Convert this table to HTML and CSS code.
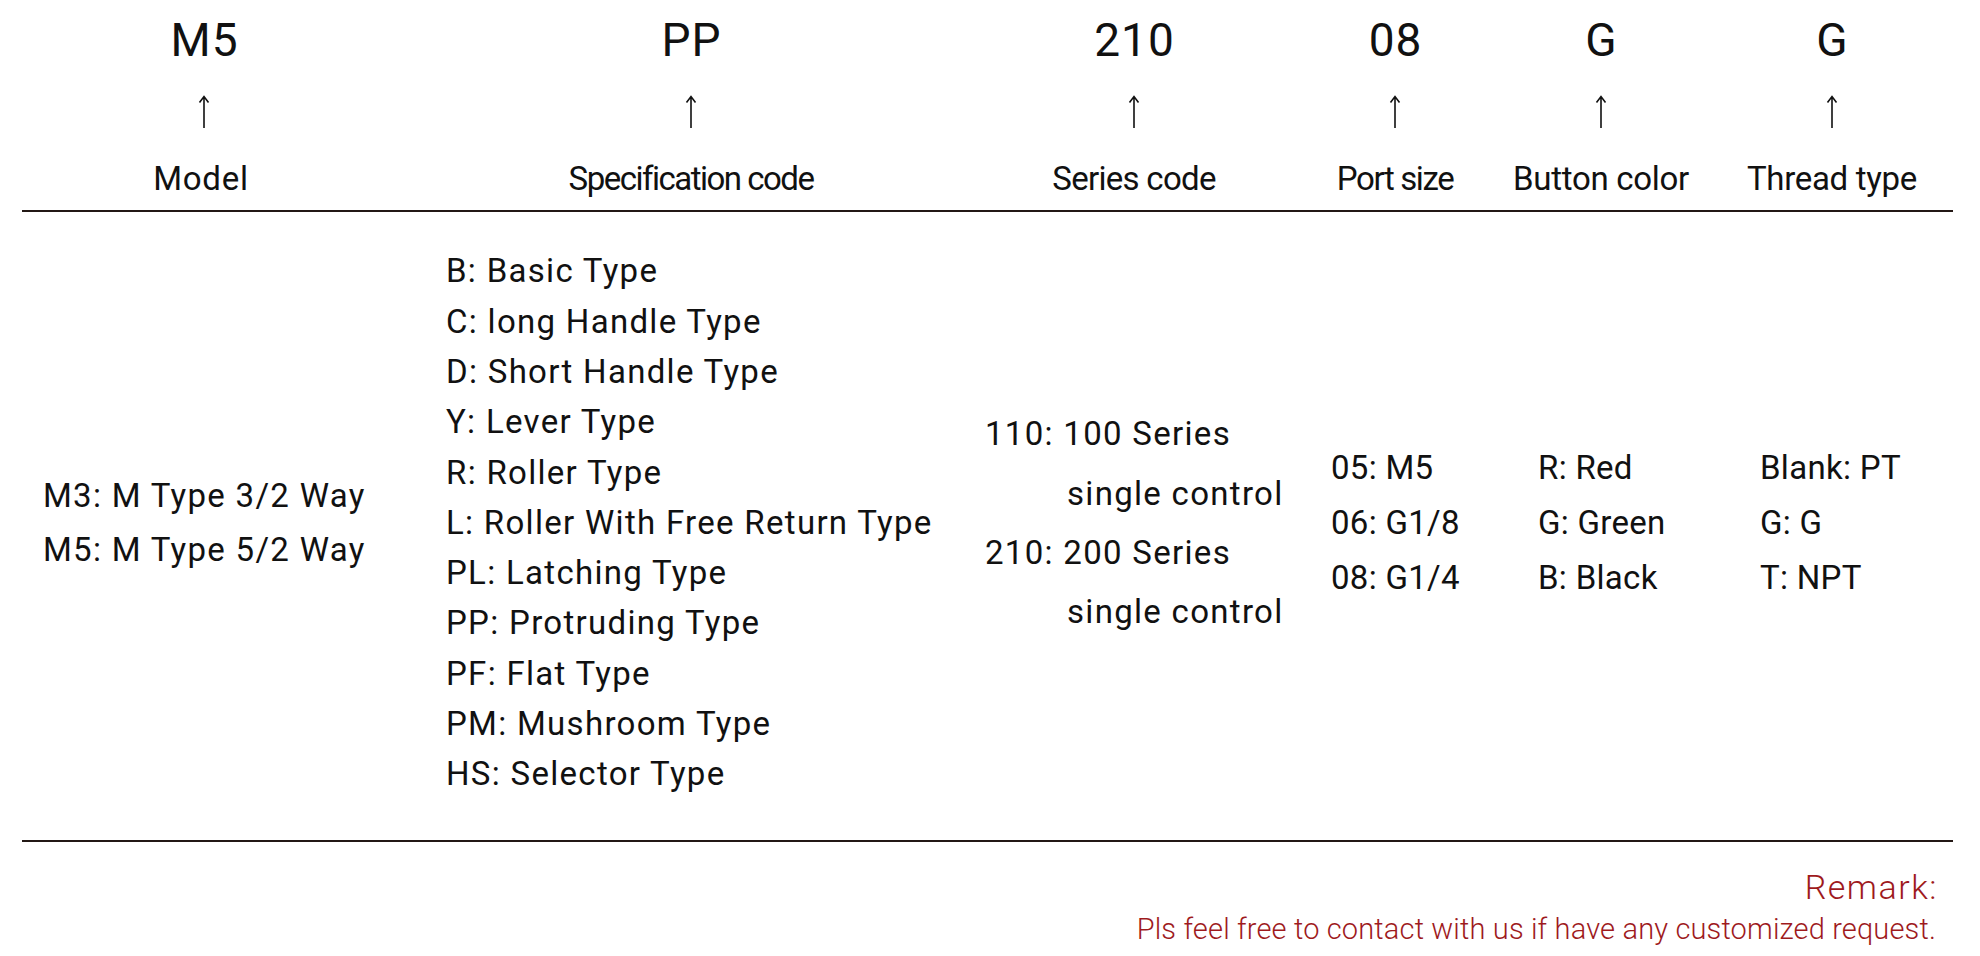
FILE: index.html
```html
<!DOCTYPE html>
<html lang="en">
<head>
<meta charset="utf-8">
<title>Model code</title>
<link rel="stylesheet" href="styles.css">
</head>
<body>
<div class="page">
  <div class="codes">
    <div class="code-col"><div class="code">M5</div><svg class="arrow" viewBox="0 0 14 33" width="14" height="33"><path d="M7 1.5V33M2.5 7.5L7 1.5L11.5 7.5"/></svg><div class="label label-model">Model</div></div>
    <div class="code-col"><div class="code">PP</div><svg class="arrow" viewBox="0 0 14 33" width="14" height="33"><path d="M7 1.5V33M2.5 7.5L7 1.5L11.5 7.5"/></svg><div class="label label-spec">Specification code</div></div>
    <div class="code-col"><div class="code">210</div><svg class="arrow" viewBox="0 0 14 33" width="14" height="33"><path d="M7 1.5V33M2.5 7.5L7 1.5L11.5 7.5"/></svg><div class="label label-series">Series code</div></div>
    <div class="code-col"><div class="code">08</div><svg class="arrow" viewBox="0 0 14 33" width="14" height="33"><path d="M7 1.5V33M2.5 7.5L7 1.5L11.5 7.5"/></svg><div class="label label-port">Port size</div></div>
    <div class="code-col"><div class="code">G</div><svg class="arrow" viewBox="0 0 14 33" width="14" height="33"><path d="M7 1.5V33M2.5 7.5L7 1.5L11.5 7.5"/></svg><div class="label label-tight">Button color</div></div>
    <div class="code-col code-col-last"><div class="code">G</div><svg class="arrow" viewBox="0 0 14 33" width="14" height="33"><path d="M7 1.5V33M2.5 7.5L7 1.5L11.5 7.5"/></svg><div class="label label-tight">Thread type</div></div>
  </div>
  <div class="options">
    <ul class="opt opt-wide opt-model">
      <li>M3: M Type 3/2 Way</li>
      <li>M5: M Type 5/2 Way</li>
    </ul>
    <ul class="opt opt-wide opt-spec">
      <li>B: Basic Type</li>
      <li>C: long Handle Type</li>
      <li>D: Short Handle Type</li>
      <li>Y: Lever Type</li>
      <li>R: Roller Type</li>
      <li>L: Roller With Free Return Type</li>
      <li>PL: Latching Type</li>
      <li>PP: Protruding Type</li>
      <li>PF: Flat Type</li>
      <li>PM: Mushroom Type</li>
      <li>HS: Selector Type</li>
    </ul>
    <ul class="opt opt-wide opt-series">
      <li>110: 100 Series</li>
      <li class="indent">single control</li>
      <li>210: 200 Series</li>
      <li class="indent">single control</li>
    </ul>
    <ul class="opt opt-short">
      <li>05: M5</li>
      <li>06: G1/8</li>
      <li>08: G1/4</li>
    </ul>
    <ul class="opt opt-short">
      <li>R: Red</li>
      <li>G: Green</li>
      <li>B: Black</li>
    </ul>
    <ul class="opt opt-short">
      <li>Blank: PT</li>
      <li>G: G</li>
      <li>T: NPT</li>
    </ul>
  </div>
  <div class="remark">
    <p class="remark-title">Remark:</p>
    <p class="remark-text">Pls feel free to contact with us if have any customized request.</p>
  </div>
</div>
</body>
</html>
```

FILE: styles.css
```css
* { box-sizing: border-box; }
html, body { margin: 0; padding: 0; background: #ffffff; }
body {
  font-family: Roboto, "Liberation Sans", Arial, sans-serif;
  color: #111111;
  width: 1980px;
  height: 956px;
  overflow: hidden;
}
.page { width: 1980px; }

.codes {
  display: grid;
  grid-template-columns: 364px 610px 276px 246px 166px 269px;
  padding: 14px 0 11px 0;
  margin: 0 27px 0 22px;
  border-bottom: 2px solid #231815;
}
.code-col {
  display: flex;
  flex-direction: column;
  align-items: center;
}
.code-col-last { padding-left: 27px; }
.code {
  font-size: 46px;
  letter-spacing: 1px;
  text-indent: 1px;
  line-height: 52px;
  height: 52px;
}
.arrow {
  margin-top: 29px;
  fill: none;
  stroke: #111111;
  stroke-width: 1.6;
  display: block;
}
.label {
  margin-top: 31px;
  font-size: 33px;
  line-height: 40px;
  height: 40px;
  white-space: nowrap;
}
.label-model { letter-spacing: 0.75px; margin-right: 6px; }
.label-spec { letter-spacing: -1.5px; }
.label-series { letter-spacing: -0.7px; }
.label-port { letter-spacing: -1.4px; }
.label-tight { letter-spacing: -0.3px; }

.options {
  display: grid;
  grid-template-columns: 403px 539px 346px 207px 222px 1fr;
  align-items: center;
  height: 630px;
  padding: 0 0 6px 21px;
  margin: 0 27px 0 22px;
  border-bottom: 2px solid #231815;
}
.opt {
  list-style: none;
  margin: 0;
  padding: 0;
  font-size: 33px;
  letter-spacing: 0.3px;
  white-space: nowrap;
}
.opt-wide { letter-spacing: 1.3px; }
.opt-model li { line-height: 54px; }
.opt-spec li { line-height: 50.3px; }
.opt-series li { line-height: 59.3px; }
.opt-series .indent { padding-left: 82px; }
.opt-short { margin-top: -2px; }
.opt-short li { line-height: 55px; }

.remark {
  padding: 24px 44px 0 0;
  text-align: right;
  color: #9e1a1d;
  font-weight: 300;
}
.remark p { margin: 0; line-height: 42px; }
.remark-title {
  font-size: 34px;
  letter-spacing: 1.5px;
  margin-right: -2px !important;
}
.remark-text {
  font-size: 29px;
  letter-spacing: 0.15px;
}
```
